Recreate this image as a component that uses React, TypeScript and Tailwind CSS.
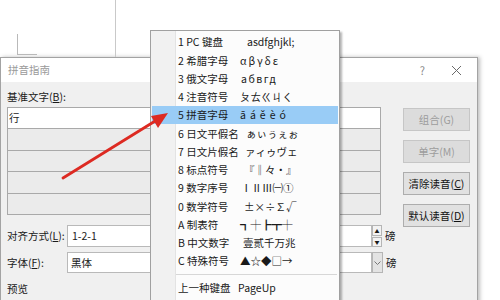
import React from 'react';

interface MenuItem {
  label: string;
  sample: string;
  pad: string;
  active?: boolean;
}

const items: MenuItem[] = [
  { label: '1 PC 键盘', sample: 'asdfghjkl;', pad: 'pl-[7px]' },
  { label: '2 希腊字母', sample: 'αβγδε', pad: 'pl-[0px] tracking-[2px]' },
  { label: '3 俄文字母', sample: 'абвгд', pad: 'pl-[1px] tracking-[1.5px]' },
  { label: '4 注音符号', sample: 'ㄆㄊㄍㄐㄑ', pad: 'pl-[0px]' },
  { label: '5 拼音字母', sample: 'āáěèó', pad: 'pl-[0px] tracking-[4px]', active: true },
  { label: '6 日文平假名', sample: 'ぁぃぅぇぉ', pad: 'pl-[6px]' },
  { label: '7 日文片假名', sample: 'ァィゥヴェ', pad: 'pl-[5px]' },
  { label: '8 标点符号', sample: '『‖々·』', pad: 'pl-[4px]' },
  { label: '9 数字序号', sample: 'ⅠⅡⅢ㈠①', pad: 'pl-[1px]' },
  { label: '0 数学符号', sample: '±×÷∑√', pad: 'pl-[4px]' },
  { label: 'A 制表符', sample: '┓┼┣┳┼', pad: 'pl-[0px]' },
  { label: 'B 中文数字', sample: '壹贰千万兆', pad: 'pl-[3px]' },
  { label: 'C 特殊符号', sample: '▲☆◆□→', pad: 'pl-[0px]' },
];

function SymbolMenu() {
  return (
    <div className="absolute left-[150px] top-[30px] w-[190px] h-[290px] border border-[#a0a0a0] bg-[linear-gradient(to_right,#f1f1f1_0,#f1f1f1_24px,#e3e3e3_24px,#e3e3e3_25px,#fcfcfc_25px)] shadow-[2px_2px_2px_rgba(0,0,0,0.3)] py-[2px] text-[10.5px] text-[#1a1a1a]">
      {items.map((it) => (
        <div
          key={it.label}
          className={`mx-[1px] h-[18.25px] flex items-center pl-[26px] ${it.active ? 'bg-[#99ccf6]' : ''}`}
        >
          <span className="w-[62px] shrink-0 whitespace-nowrap">{it.label}</span>
          <span className={`whitespace-nowrap ${it.pad}`}>{it.sample}</span>
        </div>
      ))}
      {/* 分隔线 */}
      <div className="h-[8px] flex items-center pl-[25px] pr-[2px]">
        <div className="h-px w-full bg-[#d7d7d7]" />
      </div>
      <div className="mx-[1px] h-[18.25px] flex items-center pl-[26px]">
        <span className="w-[60px] shrink-0">上一种键盘</span>
        <span>PageUp</span>
      </div>
      <div className="mx-[1px] h-[18.25px] flex items-center pl-[26px]">
        <span className="w-[60px] shrink-0">下一种键盘</span>
        <span>PageDown</span>
      </div>
    </div>
  );
}

function Btn({ children, disabled }: { children: React.ReactNode; disabled?: boolean }) {
  return (
    <div
      className={`h-[23px] w-[67px] flex items-center justify-center border ${
        disabled
          ? 'bg-[#dcdcdc] border-[#c6c6c6] text-[#9c9c9c]'
          : 'bg-[#e1e1e1] border-[#adadad] text-[#111]'
      }`}
    >
      {children}
    </div>
  );
}

export default function App() {
  return (
    <div className="relative w-[500px] h-[300px] overflow-hidden bg-white font-['Noto_Sans_CJK_SC','Noto_Sans',sans-serif] text-[10.5px] text-[#1a1a1a]">
      {/* 文档背景 */}
      <div className="relative h-[57px]">
        <div className="absolute left-[115px] top-0 h-full w-px bg-[#c9c9c9]" />
        <div className="absolute left-[17px] top-[34px] w-[20px] h-[21px] border-l border-b border-[#b9b9b9]" />
      </div>

      {/* 拼音指南 对话框 */}
      <div className="w-[478px] h-[260px] border border-[#a3a3a3] bg-[#f0f0f0] shadow-[2px_0_4px_rgba(0,0,0,0.25)]">
        <div className="h-[24px] bg-white flex items-center pl-[7px] pr-[14px] text-[#9a9a9a]">
          <span className="flex-1">拼音指南</span>
          <span className="text-[11px] text-[#8a8a8a] mr-[26px]">?</span>
          <svg width="11" height="11" viewBox="0 0 11 11" className="mr-[1px]">
            <path d="M1 1 L10 10 M10 1 L1 10" stroke="#6a6a6a" strokeWidth="1" />
          </svg>
        </div>

        <div className="pl-[6px] pt-[9px] flex flex-col">
          <div className="h-[124px] flex items-start gap-[22px]">
            <div className="w-[374px]">
              <div className="h-[12px] leading-[12px]">
                基准文字(<span className="underline">B</span>):
              </div>
              <div className="mt-[4px] flex flex-col">
                <div className="h-[22px] border border-[#a9a9a9] bg-white flex items-center pl-[1px]">行</div>
                <div className="h-[21.5px] border border-t-0 border-[#a9a9a9] bg-[#ebebeb]" />
                <div className="h-[21.5px] border border-t-0 border-[#a9a9a9] bg-[#ebebeb]" />
                <div className="h-[21.5px] border border-t-0 border-[#a9a9a9] bg-[#ebebeb]" />
                <div className="h-[21.5px] border border-t-0 border-[#a9a9a9] bg-[#ebebeb]" />
              </div>
            </div>
            <div className="pt-[17px] flex flex-col gap-[9px]">
              <Btn disabled>组合(G)</Btn>
              <Btn disabled>单字(M)</Btn>
              <Btn>
                清除读音(<span className="underline">C</span>)
              </Btn>
              <Btn>
                默认读音(<span className="underline">D</span>)
              </Btn>
            </div>
          </div>

          {/* 对齐方式 */}
          <div className="mt-[10px] h-[22px] flex items-center">
            <span className="w-[60px] shrink-0">
              对齐方式(<span className="underline">L</span>):
            </span>
            <div className="w-[305px] h-full border border-[#b9b9b9] bg-white flex items-center pl-[4px]">1-2-1</div>
            <div className="w-[10px] h-full flex flex-col gap-px">
              <div className="flex-1 border border-[#b5b5b5] bg-[#f3f3f3] flex items-center justify-center text-[5px] leading-none">▲</div>
              <div className="flex-1 border border-[#b5b5b5] bg-[#f3f3f3] flex items-center justify-center text-[5px] leading-none">▼</div>
            </div>
            <span className="ml-[3px]">磅</span>
          </div>

          {/* 字体 */}
          <div className="mt-[5px] h-[21px] flex items-center">
            <span className="w-[60px] shrink-0">
              字体(<span className="underline">F</span>):
            </span>
            <div className="w-[305px] h-full border border-[#b9b9b9] bg-white flex items-center pl-[3px]">黑体</div>
            <div className="w-[11px] h-full border border-[#b5b5b5] bg-[#e3e3e3] flex items-center justify-center">
              <svg width="7" height="4" viewBox="0 0 7 4">
                <path d="M0.5 0.5 L3.5 3.5 L6.5 0.5" fill="none" stroke="#777" strokeWidth="1" />
              </svg>
            </div>
            <span className="ml-[3px]">磅</span>
          </div>

          <div className="mt-[10px] h-[12px] leading-[12px]">预览</div>
        </div>
      </div>

      <SymbolMenu />

      {/* 红色箭头 */}
      <svg className="absolute left-0 top-0" width="500" height="300" viewBox="0 0 500 300">
        <line x1="63" y1="178" x2="156" y2="120.5" stroke="#dd2a22" strokeWidth="2.8" strokeLinecap="round" />
        <polygon points="168,113 151,116 158,128" fill="#dd2a22" />
      </svg>
    </div>
  );
}
